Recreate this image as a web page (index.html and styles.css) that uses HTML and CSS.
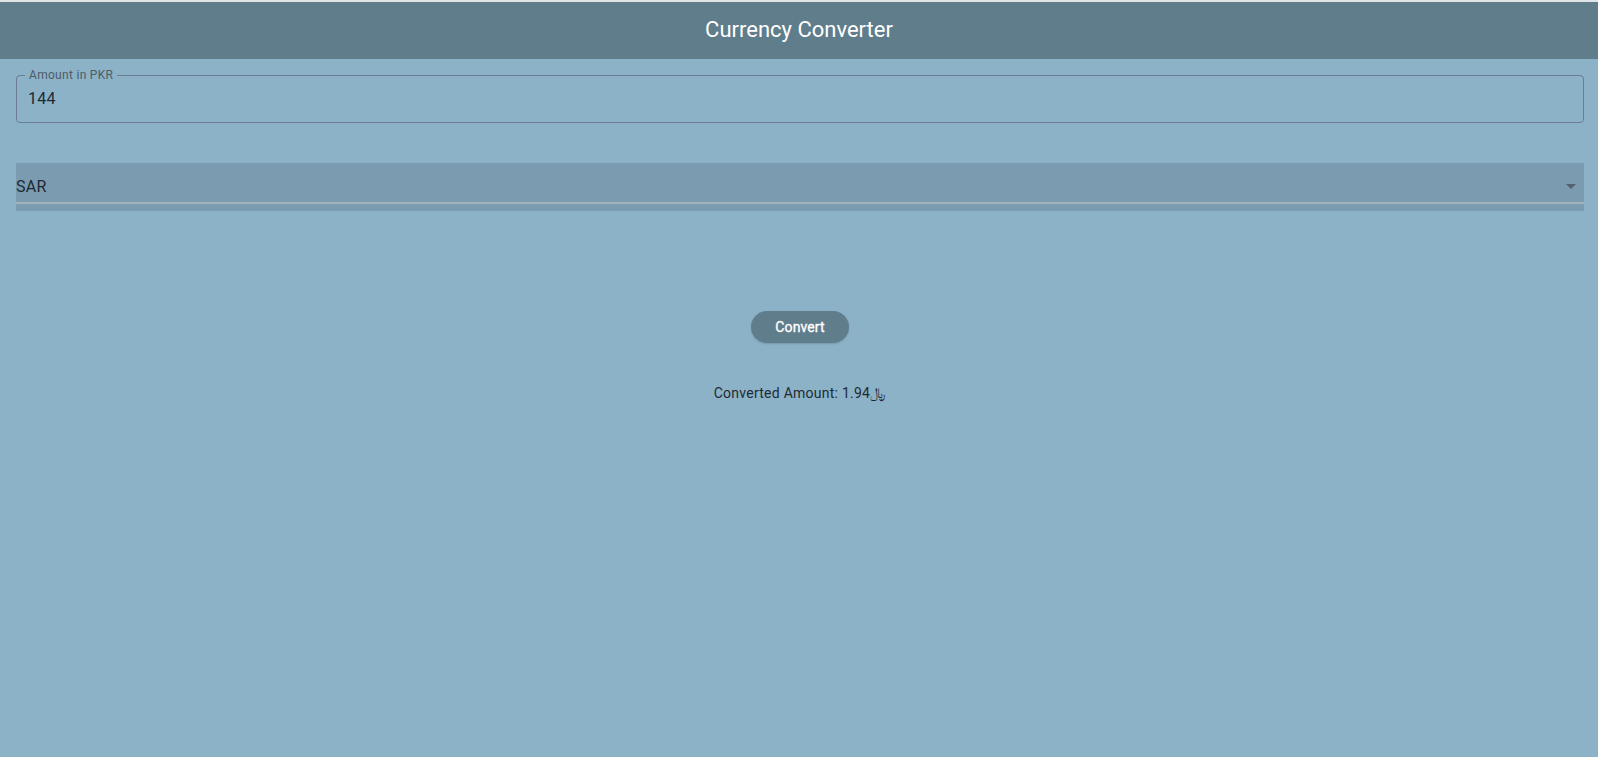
FILE: index.html
```html
<!DOCTYPE html>
<html lang="en">
<head>
<meta charset="utf-8">
<title>Currency Converter</title>
<link rel="stylesheet" href="styles.css">
</head>
<body>
<header class="appbar">
  <h1 class="title">Currency Converter</h1>
</header>
<main class="content">
  <fieldset class="outlined">
    <legend class="legend">Amount in PKR</legend>
    <div class="value">144</div>
  </fieldset>
  <div class="select">
    <div class="select-row">
      <span class="select-text">SAR</span>
      <span class="arrow"></span>
    </div>
    <div class="underline"></div>
    <div class="select-tail"></div>
  </div>
  <div class="actions">
    <button class="btn">Convert</button>
  </div>
  <p class="result">Converted Amount: 1.94﷼</p>
</main>
</body>
</html>
```

FILE: styles.css
```css
html, body {
  margin: 0;
  padding: 0;
}
body {
  background: #8cb2c8;
  font-family: Roboto, "Noto Sans", "DejaVu Sans", sans-serif;
  min-height: 757px;
  border-top: 2px solid #dfe4e7;
  box-sizing: border-box;
}
.appbar {
  height: 57px;
  background: #607d8b;
  display: flex;
  align-items: center;
  justify-content: center;
}
.title {
  margin: 0;
  font-size: 22px;
  font-weight: 400;
  color: #ffffff;
  letter-spacing: 0;
  padding-bottom: 2px;
}
.content {
  padding: 16px 14px 0 16px;
  display: flex;
  flex-direction: column;
}
.outlined {
  margin: 0;
  height: 48px;
  box-sizing: border-box;
  border: 1px solid #6c7d93;
  border-radius: 4px;
  padding: 0 11px;
  position: relative;
}
.legend {
  position: absolute;
  top: -9px;
  left: 8px;
  padding: 0 4px;
  background: #8cb2c8;
  font-size: 12px;
  line-height: 16px;
  color: #4c5c69;
  letter-spacing: 0.3px;
}
.value {
  font-size: 16px;
  line-height: 20px;
  color: #1e2a33;
  padding-top: 13px;
  letter-spacing: 0.3px;
}
.select {
  margin-top: 40px;
  height: 48px;
  background: #7b9bb0;
  display: flex;
  flex-direction: column;
}
.select-row {
  height: 39px;
  display: flex;
  align-items: center;
  justify-content: space-between;
  padding-right: 8px;
  box-sizing: border-box;
  padding-top: 7px;
}
.select-text {
  font-size: 16px;
  color: #1e2a33;
  letter-spacing: 0.3px;
}
.arrow {
  width: 0;
  height: 0;
  border-left: 5px solid transparent;
  border-right: 5px solid transparent;
  border-top: 5px solid #56636c;
}
.underline {
  height: 2px;
  background: #a3b3bc;
}
.select-tail {
  flex: 1;
}
.actions {
  margin-top: 100px;
  display: flex;
  justify-content: center;
  padding-left: 0;
}
.btn {
  width: 98px;
  height: 32px;
  border: none;
  border-radius: 16px;
  background: #607d8b;
  color: #ffffff;
  font-family: Roboto, "Noto Sans", sans-serif;
  font-size: 14px;
  font-weight: 400;
  -webkit-text-stroke: 0.35px #ffffff;
  letter-spacing: 0.1px;
  box-shadow: 0 1px 2px rgba(0,0,0,0.15);
}
.result {
  margin: 40px 0 0 0;
  text-align: center;
  font-size: 14px;
  line-height: 20px;
  color: #1e2a33;
  letter-spacing: 0.25px;
  padding-left: 0;
}
```
